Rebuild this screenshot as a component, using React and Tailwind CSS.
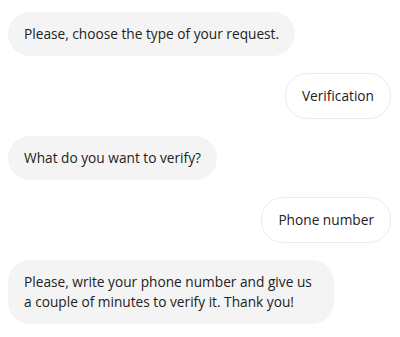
const messages = [
  { from: "bot", text: "Please, choose the type of your request." },
  { from: "user", text: "Verification" },
  { from: "bot", text: "What do you want to verify?" },
  { from: "user", text: "Phone number" },
  {
    from: "bot",
    text: "Please, write your phone number and give us a couple of minutes to verify it. Thank you!",
  },
];

export default function App() {
  return (
    <div
      className="w-[400px] h-[337px] bg-white pt-3 pl-2 pr-[9px] flex flex-col gap-[17px] text-[13.7px] leading-5 text-[#222]"
      style={{ fontFamily: '"Open Sans", "Noto Sans", sans-serif' }}
    >
      {messages.map((m, i) =>
        m.from === "bot" ? (
          <div key={i} className="flex justify-start">
            <div className="max-w-[326px] bg-[#f4f4f4] rounded-[22px] px-4 py-3">
              {m.text}
            </div>
          </div>
        ) : (
          <div key={i} className="flex justify-end">
            <div className="bg-white border border-[#ececec] rounded-[22px] px-4 py-3">
              {m.text}
            </div>
          </div>
        )
      )}
    </div>
  );
}
